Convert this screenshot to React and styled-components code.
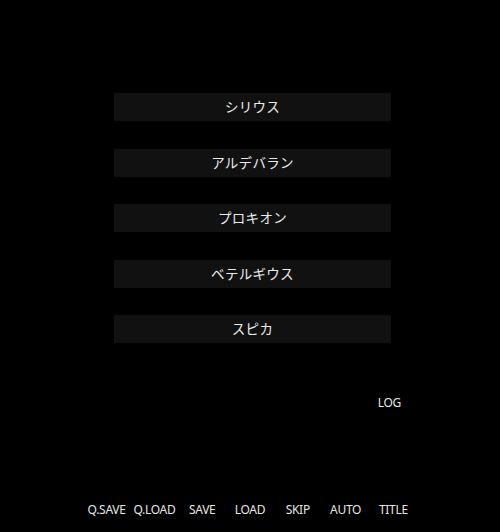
import styled, { createGlobalStyle } from "styled-components";

const GlobalStyle = createGlobalStyle`
  html, body {
    margin: 0;
    padding: 0;
    background: #000;
  }
  body {
    font-family: "Noto Sans", "Noto Sans CJK JP", sans-serif;
    color: #e6e6e6;
  }
`;

const Screen = styled.div`
  width: 500px;
  height: 532px;
  background: #000;
  display: flex;
  flex-direction: column;
  box-sizing: border-box;
  padding-top: 93px;
`;

const ChoiceList = styled.div`
  display: flex;
  flex-direction: column;
  gap: 27.5px;
  padding-left: 114px;
`;

const Choice = styled.div`
  width: 277px;
  height: 28px;
  box-sizing: border-box;
  padding-bottom: 2px;
  background: #111111;
  display: flex;
  align-items: center;
  justify-content: center;
  font-family: "Noto Sans CJK JP", sans-serif;
  font-size: 13.5px;
  color: #ececec;
  letter-spacing: 0.3px;
`;

const LogRow = styled.div`
  display: flex;
  justify-content: flex-end;
  padding-right: 99px;
  margin-top: 52px;
`;

const TextButton = styled.div`
  font-size: 12px;
  color: #e6e6e6;
  letter-spacing: -0.3px;
  line-height: 16px;
`;

const QuickMenu = styled.div`
  margin-top: auto;
  margin-bottom: 14px;
  display: flex;
  justify-content: center;
`;

const MenuItem = styled(TextButton)`
  width: 47.8px;
  text-align: center;
`;

const choices = ["シリウス", "アルデバラン", "プロキオン", "ベテルギウス", "スピカ"];
const menu = ["Q.SAVE", "Q.LOAD", "SAVE", "LOAD", "SKIP", "AUTO", "TITLE"];

export default function App() {
  return (
    <>
      <GlobalStyle />
      <Screen>
        <ChoiceList>
          {choices.map((c) => (
            <Choice key={c}>{c}</Choice>
          ))}
        </ChoiceList>
        <LogRow>
          <TextButton>LOG</TextButton>
        </LogRow>
        <QuickMenu>
          {menu.map((m) => (
            <MenuItem key={m}>{m}</MenuItem>
          ))}
        </QuickMenu>
      </Screen>
    </>
  );
}
